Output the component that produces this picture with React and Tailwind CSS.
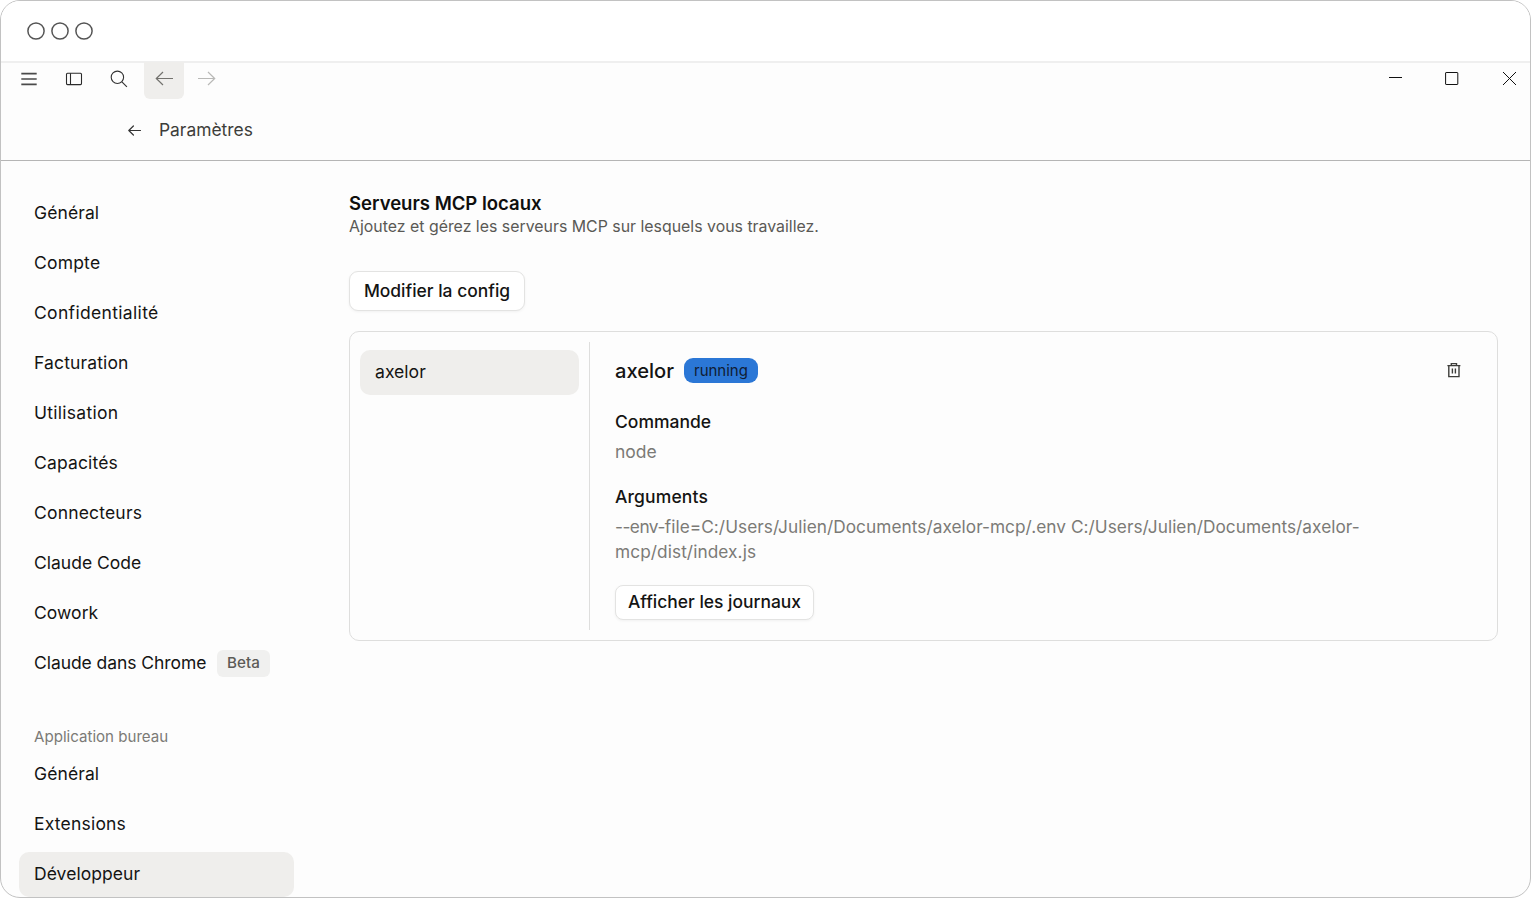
import React from "react";

const mainNav = [
  { label: "Général", cls: "tracking-[0.1px]" },
  { label: "Compte", cls: "tracking-[0.2px]" },
  { label: "Confidentialité", cls: "tracking-[0.33px]" },
  { label: "Facturation", cls: "tracking-[0.14px]" },
  { label: "Utilisation", cls: "tracking-[0.27px]" },
  { label: "Capacités", cls: "tracking-[0.16px]" },
  { label: "Connecteurs", cls: "tracking-[0.18px]" },
  { label: "Claude Code", cls: "" },
  { label: "Cowork", cls: "tracking-[0.05px]" },
  { label: "Claude dans Chrome", cls: "tracking-[-0.06px]", badge: "Beta" },
];

const desktopNav = [
  { label: "Général", cls: "tracking-[0.1px]" },
  { label: "Extensions", cls: "tracking-[0.2px]" },
  { label: "Développeur", cls: "tracking-[0.05px]", active: true },
];

function NavItem({ label, cls, badge, active }) {
  return (
    <a
      className={`flex h-[45px] items-center rounded-[10px] pl-[15px] text-[17.5px] text-[#141413] ${active ? "bg-[#efeeec]" : ""}`}
    >
      <span className={`whitespace-nowrap ${cls}`}>{label}</span>
      {badge && (
        <span className="ml-[11px] flex h-[27px] w-[53px] items-center justify-center rounded-md bg-[#f0f0ef] pr-px text-[15.2px] font-medium text-[#5c5b57]">
          {badge}
        </span>
      )}
    </a>
  );
}

function TitleBar() {
  return (
    <div className="flex h-[62px] shrink-0 items-center border-b-2 border-[#efefef] bg-white pl-[26px]">
      <svg width="68" height="20" viewBox="0 0 68 20" fill="none" stroke="#555" strokeWidth="1.5">
        <circle cx="9" cy="10" r="8.1" />
        <circle cx="33" cy="10" r="8.1" />
        <circle cx="57" cy="10" r="8.1" />
      </svg>
    </div>
  );
}

function Toolbar() {
  return (
    <div className="-mt-px flex h-[37px] shrink-0 items-center justify-between">
      <div className="flex h-full items-center">
        <svg className="mt-[-4px] ml-[20px]" width="16" height="14" viewBox="0 0 16 14" stroke="#4a4a4a" strokeWidth="1.7">
          <path d="M.3 1.7h15.4M.3 7h15.4M.3 12.3h15.4" />
        </svg>
        <svg className="mt-[-4px] ml-[28px]" width="18" height="14" viewBox="0 0 18 14" fill="none" stroke="#2b2b2b" strokeWidth="1.1">
          <rect x="1.5" y="1.3" width="15" height="11.3" rx="1" />
          <path d="M5.5 1.3v11.3" />
        </svg>
        <svg className="mt-[-4px] ml-[27px]" width="18" height="18" viewBox="0 0 18 18" fill="none" stroke="#333" strokeWidth="1.1">
          <circle cx="7.4" cy="7.3" r="6.2" />
          <path d="M11.9 11.8l5 5" />
        </svg>
        <div className="ml-[16px] flex h-full w-[40px] items-center justify-center rounded-b-[6px] bg-[#efeeec]">
          <svg className="mt-[-5px]" width="18" height="15" viewBox="0 0 18 15" fill="none" stroke="#73726e" strokeWidth="1.2">
            <path d="M18 7.5H1.3M8 1L1.3 7.5 8 14" />
          </svg>
        </div>
        <svg className="mt-[-5px] ml-[14px]" width="18" height="15" viewBox="0 0 18 15" fill="none" stroke="#b9b9b7" strokeWidth="1.2">
          <path d="M0 7.5h16.7M10 1l6.7 6.5L10 14" />
        </svg>
      </div>
      <div className="mt-[-6px] mr-[13px] flex items-center">
        <svg width="14" height="14" viewBox="0 0 14 14" stroke="#111" strokeWidth="1">
          <path d="M0 6.5h13" />
        </svg>
        <svg className="ml-[42px]" width="14" height="14" viewBox="0 0 14 14" fill="none" stroke="#111" strokeWidth="1">
          <rect x=".6" y="1.5" width="12.2" height="12" rx=".5" />
        </svg>
        <svg className="ml-[44px]" width="14" height="14" viewBox="0 0 14 14" stroke="#111" strokeWidth="1">
          <path d="M0 1l13 13M13 1L0 14" />
        </svg>
      </div>
    </div>
  );
}

export default function App() {
  return (
    <div className="h-[898px] w-[1531px] bg-white font-['Inter','Liberation_Sans',sans-serif]">
      <div className="flex h-full w-full flex-col overflow-hidden rounded-[20px] border border-[#c2c2c2] bg-[#fdfdfd]">
        <TitleBar />
        <Toolbar />
        <div className="flex h-[62px] shrink-0 items-center border-b border-[#b5b5b5] pt-[2px] pl-[127px]">
          <svg width="14" height="12" viewBox="0 0 14 12" fill="none" stroke="#333" strokeWidth="1.2" strokeLinecap="round" strokeLinejoin="round">
            <path d="M12.5 5.5H.8M5.4 1L.8 5.5 5.4 10" />
          </svg>
          <h1 className="ml-[17px] text-[17.4px] text-[#3d3d3a]">Paramètres</h1>
        </div>

        <div className="flex min-h-0 flex-1">
          <aside className="w-[293px] shrink-0 pt-[30px] pl-[18px]">
            <nav className="flex flex-col gap-[5px]">
              {mainNav.map((item) => (
                <NavItem key={item.label} {...item} />
              ))}
            </nav>
            <div className="mt-[41px] flex h-[21px] items-center pl-[15px] text-[15.1px] text-[#7b7a76]">
              Application bureau
            </div>
            <nav className="mt-[4px] flex flex-col gap-[5px]">
              {desktopNav.map((item) => (
                <NavItem key={item.label} {...item} />
              ))}
            </nav>
          </aside>

          <main className="ml-[55px] w-[1149px] pt-[30px]">
            <h2 className="text-[18.52px] leading-[25px] font-semibold text-[#0f0f0e]">Serveurs MCP locaux</h2>
            <p className="text-[15.88px] leading-[21px] text-[#5a5955]">
              Ajoutez et gérez les serveurs MCP sur lesquels vous travaillez.
            </p>
            <button className="mt-[34px] flex h-[40px] w-[176px] items-center justify-center rounded-[9px] border border-[#e3e3e2] bg-white text-[17.45px] font-medium text-[#141413] shadow-[0_1px_3px_rgba(0,0,0,0.05)]">
              Modifier la config
            </button>

            <section className="mt-[20px] flex h-[310px] rounded-[10px] border border-[#dededd] px-[10px] py-[10px]">
              <div className="w-[230px] border-r border-[#dededd] pt-[8px] pr-[10px]">
                <div className="flex h-[45px] items-center rounded-[10px] bg-[#efeeec] pl-[15px] text-[17.6px] text-[#141413]">
                  axelor
                </div>
              </div>
              <div className="flex-1 pt-[16px] pr-[25px] pl-[25px]">
                <div className="flex h-[25px] items-center">
                  <h3 className="pt-[2px] text-[20.1px] font-medium text-[#141413]">axelor</h3>
                  <span className="ml-[10px] flex h-[25px] w-[74px] items-center justify-center rounded-[9px] bg-[#2b77d6] pt-[2px] text-[15px] text-[#101c33]">
                    running
                  </span>
                  <svg className="mt-[-2px] ml-auto" width="16" height="16" viewBox="0 0 16 16" fill="none" stroke="#3d3d3a" strokeWidth="1.4">
                    <path d="M1.4 3.6h13M5.3 3.6V1.6h5.2v2M2.8 3.6v11h10.2v-11M6.4 6.4v5M9.4 6.4v5" />
                  </svg>
                </div>
                <h4 className="mt-[26px] text-[17.5px] leading-[25px] font-medium text-[#141413]">Commande</h4>
                <p className="mt-[5px] text-[17.5px] leading-[25px] text-[#7b7a76]">node</p>
                <h4 className="mt-[20px] text-[17.5px] leading-[25px] font-medium tracking-[0.13px] text-[#141413]">Arguments</h4>
                <p className="mt-[5px] text-[17.26px] leading-[25px] text-[#7b7a76]">
                  <span className="whitespace-nowrap">
                    <span className="tracking-[-0.5px]">--env-</span>
                    <span className="tracking-[0.04px]">
                      file=C:/Users/Julien/Documents/axelor-mcp/.env C:/Users/Julien/Documents/axelor-
                    </span>
                  </span>
                  <br />
                  <span className="tracking-[0.08px]">mcp/dist/index.js</span>
                </p>
                <button className="mt-[21px] flex h-[35px] w-[199px] items-center justify-center rounded-[8px] border border-[#e3e3e2] bg-white text-[17.45px] font-medium text-[#141413] shadow-[0_1px_3px_rgba(0,0,0,0.05)]">
                  Afficher les journaux
                </button>
              </div>
            </section>
          </main>
        </div>
      </div>
    </div>
  );
}
